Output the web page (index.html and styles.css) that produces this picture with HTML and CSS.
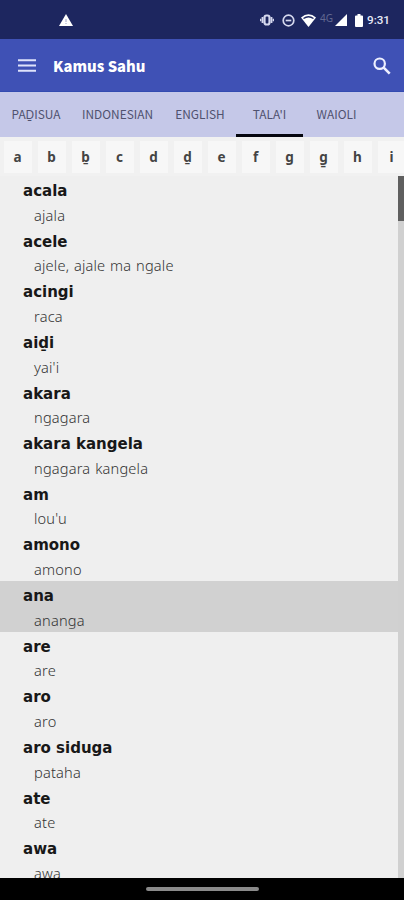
FILE: index.html
```
<!DOCTYPE html>
<html lang="en">
<head>
<meta charset="utf-8">
<title>Kamus Sahu</title>
<link rel="stylesheet" href="styles.css">
</head>
<body>
<header class="status">
  <svg class="warn" viewBox="0 0 14 12"><path d="M7 0L14 12H0Z" fill="#fff"/><path d="M7 5v3M7 9v1" stroke="#b4b7d4" stroke-width="1.300"/></svg>
  <div class="status-icons">
    <svg width="14" height="12" viewBox="0 0 14 12" fill="none" stroke="#d5d8ee"><rect x="4.500" y="1.500" width="5" height="9" rx="2" stroke-width="2.200"/><path d="M2.500 3v6M11.500 3v6" stroke-width="1.800"/><path d="M.7 4.700v2.600M13.300 4.700v2.600" stroke-width="1.400"/></svg>
    <svg class="dnd" width="13" height="13" viewBox="0 0 13 13" fill="none" stroke="#d5d8ee" stroke-width="1.700"><circle cx="6.500" cy="6.500" r="5.300"/><path d="M3.700 6.500h5.600"/></svg>
    <svg class="wifi" width="15" height="13" viewBox="0 0 15 13"><path d="M0 3.500Q7.500-3 15 3.500L7.500 13Z" fill="#fff"/><path d="M2.500 4.500Q7.500 1 12.500 4.500" fill="none" stroke="#1d265f" stroke-width="1.400"/></svg>
    <span class="net">4G</span>
    <svg class="signal" width="12" height="12" viewBox="0 0 12 12"><path d="M12 0V12H0Z" fill="#fff"/></svg>
    <svg class="battery" width="8" height="13" viewBox="0 0 8 13"><path d="M2.500 0h3v1.500H7q1 0 1 1V12q0 1-1 1H1q-1 0-1-1V2.500q0-1 1-1h1.500Z" fill="#fff"/></svg>
    <span class="clock">9:31</span>
  </div>
</header>
<div class="appbar">
  <svg class="menu" width="18" height="13" viewBox="0 0 18 13"><path d="M0 1.200h18M0 6.500h18M0 11.800h18" stroke="#dfe3fb" stroke-width="2"/></svg>
  <h1 class="title">Kamus Sahu</h1>
  <svg class="search" width="18" height="18" viewBox="0 0 18 18" fill="none" stroke="#eef0ff"><circle cx="6.700" cy="6.700" r="5.200" stroke-width="2.200"/><path d="M10.700 10.700L16.700 16.700" stroke-width="2.600"/></svg>
</div>
<nav class="tabs">
  <a class="tab t1"><span>PAḎISUA</span></a><a class="tab t2"><span>INDONESIAN</span></a><a class="tab t3"><span>ENGLISH</span></a><a class="tab t4 active"><span>TALA'I</span></a><a class="tab t5"><span>WAIOLI</span></a>
</nav>
<div class="letters">
  <b>a</b><b>b</b><b>ḇ</b><b>c</b><b>d</b><b>ḏ</b><b>e</b><b>f</b><b>g</b><b>g̱</b><b>h</b><b>i</b>
</div>
<main class="list">
  <dl class="words">
    <div><dt>acala</dt><dd>ajala</dd></div>
    <div><dt>acele</dt><dd>ajele, ajale ma ngale</dd></div>
    <div><dt>acingi</dt><dd>raca</dd></div>
    <div><dt>aiḏi</dt><dd>yai'i</dd></div>
    <div><dt>akara</dt><dd>ngagara</dd></div>
    <div><dt>akara kangela</dt><dd>ngagara kangela</dd></div>
    <div><dt>am</dt><dd>lou'u</dd></div>
    <div><dt>amono</dt><dd>amono</dd></div>
    <div class="selected"><dt>ana</dt><dd>ananga</dd></div>
    <div><dt>are</dt><dd>are</dd></div>
    <div><dt>aro</dt><dd>aro</dd></div>
    <div><dt>aro siduga</dt><dd>pataha</dd></div>
    <div><dt>ate</dt><dd>ate</dd></div>
    <div><dt>awa</dt><dd>awa</dd></div>
  </dl>
  <div class="scroll"><div class="thumb"></div></div>
</main>
<footer class="home"><div class="pill"></div></footer>
</body>
</html>
```
FILE: styles.css
```
* { box-sizing: border-box; }
body {
  margin: 0;
  width: 404px;
  height: 900px;
  overflow: hidden;
  display: flex;
  flex-direction: column;
  background: #efefef;
  font-family: "Noto Sans CJK JP", "Noto Sans", sans-serif;
}
svg { display: block; flex: none; }
.status {
  flex: none;
  height: 39px;
  background: #1d265f;
  display: flex;
  align-items: center;
  justify-content: space-between;
  padding: 1px 14px 0 59px;
}
.warn { width: 14px; height: 12px; }
.status-icons { display: flex; align-items: center; }
.dnd { margin-left: 8px; }
.wifi { margin-left: 6px; }
.net { width: 13px; margin-left: 4px; font: 10px/12px "Noto Sans", sans-serif; color: #626891; margin-top: -4px; }
.signal { margin-left: 2px; }
.battery { margin-left: 8px; }
.clock { margin-left: 4px; width: 23px; font: 500 11.7px/14px Roboto, sans-serif; color: #e8eaf8; white-space: nowrap; }
.appbar {
  flex: none;
  height: 53px;
  background: #3f51b5;
  border-bottom: 1px solid #334bb0;
  display: flex;
  align-items: center;
  padding: 1px 13px 0 18px;
}
.title { margin: 0 auto 0 17px; font-size: 14.8px; line-height: 24px; font-weight: 900; color: #fff; }
.tabs { flex: none; height: 45px; background: #c5c8e8; display: flex; }
.tab {
  display: flex;
  align-items: center;
  justify-content: center;
  padding-top: 1px;
  border-bottom: 3px solid transparent;
  font-size: 11.9px;
  color: #50526f;
  white-space: nowrap;
}
.t1 { width: 72px; }
.t2 { width: 91px; }
.t3 { width: 74px; }
.t4 { width: 67px; margin-left: -1px; }
.t5 { width: 67px; }
.active { border-bottom-color: #05060f; }
.letters {
  flex: none;
  height: 39px;
  background: #f1f1f1;
  display: flex;
  gap: 6px;
  padding: 4px 0 3px 3.5px;
  overflow: hidden;
}
.letters b {
  flex: none;
  width: 28px;
  background: #f7f7f7;
  font: 700 13.5px/33px "Noto Sans", sans-serif;
  text-align: center;
  color: #444;
}
.list { flex: 1; min-height: 0; display: flex; overflow: hidden; }
.words { flex: 1; margin: 0; }
.words > div { height: 50.65px; padding-left: 23px; }
.words dt { height: 25.65px; font: 700 16.7px/29px "DejaVu Sans Condensed", "DejaVu Sans", sans-serif; color: #181818; }
.words dd { margin: 0 0 0 11px; height: 25px; font: 300 14.6px/26px "Noto Sans", sans-serif; letter-spacing: .18px; word-spacing: .8px; color: #333; }
.words .selected { background: #d1d1d1; }
.scroll { width: 6px; background: #d0d0d0; }
.thumb { height: 45px; background: #5f5f5f; }
.home { flex: none; height: 22px; background: #000; display: flex; align-items: center; justify-content: center; }
.pill { width: 113px; height: 4px; border-radius: 2px; background: #8a8a8a; }
```
